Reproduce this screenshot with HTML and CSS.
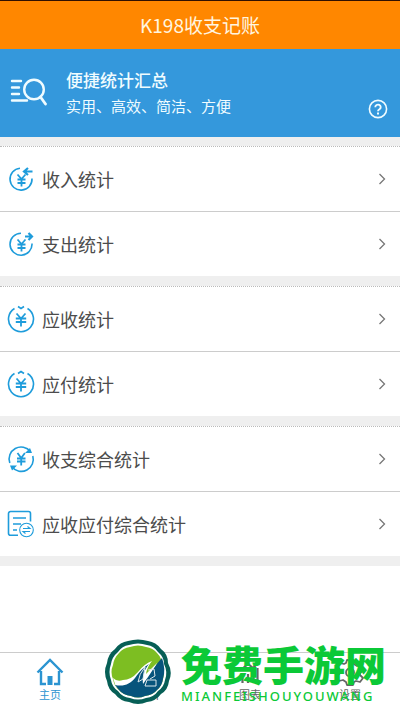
FILE: index.html
```html
<!DOCTYPE html>
<html lang="zh-CN">
<head>
<meta charset="utf-8">
<meta name="viewport" content="width=device-width, initial-scale=1">
<title>K198收支记账</title>
<link rel="stylesheet" href="styles.css">
</head>
<body>
<div class="app">
  <header class="header"><h1 class="title">K198收支记账</h1></header>
  <section class="banner">
    <svg class="banner-icon" viewBox="0 0 38 30" fill="none" stroke="currentColor" stroke-width="2.400" stroke-linecap="round">
      <path d="M2 3h9M2 9.500h7M2 16h7M2 22.500h15"/><circle cx="24" cy="11.500" r="9.800"/><path d="M30.500 19l5 7" stroke-width="2.800"/>
    </svg>
    <div class="banner-text">
      <h2 class="banner-title">便捷统计汇总</h2>
      <p class="banner-sub">实用、高效、简洁、方便</p>
    </div>
    <button class="help" aria-label="帮助">
      <svg viewBox="0 0 20 20" fill="none" stroke="currentColor" stroke-width="1.600"><circle cx="10" cy="10" r="8.600"/><path d="M7.300 8.200a2.700 2.500 0 1 1 4.200 2q-1.500.9-1.500 2" stroke-width="1.900"/><path d="M10 13.400v2" stroke-width="2"/></svg>
    </button>
  </section>
  <main class="groups">
    <nav class="group">
      <a class="row" href="#income">
        <svg class="row-icon" viewBox="0 0 28 28"><path d="M13 3.200A11 11 0 1 0 25 13.500"/><path class="yen" d="M10.500 9.500l4 4.500 4-4.500M10.500 14.500h8M10.500 18h8M14.500 14v7.500"/><path class="bold" d="M25.500 6.500h-8M21 3l-4 3.500 4 3.500"/></svg>
        <span class="label">收入统计</span><svg class="chevron" viewBox="0 0 8 12"><path d="M1.500 1l5 5-5 5"/></svg>
      </a>
      <a class="row" href="#expense">
        <svg class="row-icon" viewBox="0 0 28 28"><path d="M14 3.200A11 11 0 1 0 25 13.500"/><path class="yen" d="M10.500 9.500l4 4.500 4-4.500M10.500 14.500h8M10.500 18h8M14.500 14v7.500"/><path class="bold" d="M18 6.500h7M21.500 3l3.500 3.500-3.500 3.500"/></svg>
        <span class="label">支出统计</span><svg class="chevron" viewBox="0 0 8 12"><path d="M1.500 1l5 5-5 5"/></svg>
      </a>
    </nav>
    <nav class="group">
      <a class="row" href="#receivable">
        <svg class="row-icon" viewBox="0 0 28 28"><path d="M7.500 3.500a12.500 12.500 0 1 0 13 0M11 1.500l3 2 3-2"/><path class="yen" d="M9.500 8.500l4.500 5 4.500-5M8.800 13.500h10.400M8.800 17h10.400M14 13.500v8"/></svg>
        <span class="label">应收统计</span><svg class="chevron" viewBox="0 0 8 12"><path d="M1.500 1l5 5-5 5"/></svg>
      </a>
      <a class="row" href="#payable">
        <svg class="row-icon" viewBox="0 0 28 28"><path d="M7.500 3.500a12.500 12.500 0 1 0 13 0M11 3.500l3-2 3 2"/><path class="yen" d="M9.500 8.500l4.500 5 4.500-5M8.800 13.500h10.400M8.800 17h10.400M14 13.500v8"/></svg>
        <span class="label">应付统计</span><svg class="chevron" viewBox="0 0 8 12"><path d="M1.500 1l5 5-5 5"/></svg>
      </a>
    </nav>
    <nav class="group">
      <a class="row" href="#summary">
        <svg class="row-icon" viewBox="0 0 28 28"><path d="M2.800 18A12 12 0 0 1 23.500 6.500M25.800 11A12 12 0 0 1 5 22"/><path class="solid" d="M18 8h7l-2-5zM10 20.500H3l2 5z"/><path class="yen" d="M10.500 8l3.700 5 3.700-5M10 13.500h8.500M10 16.500h8.500M14.200 13v7.500"/></svg>
        <span class="label">收支综合统计</span><svg class="chevron" viewBox="0 0 8 12"><path d="M1.500 1l5 5-5 5"/></svg>
      </a>
      <a class="row" href="#balance">
        <svg class="row-icon" viewBox="0 0 28 28"><path d="M11 25.300H3.500a2 2 0 0 1-2-2V3.500a2 2 0 0 1 2-2h18a2 2 0 0 1 2 2v8M6 8h13M6 14h8M6 20h4"/><g class="thin"><circle cx="19.500" cy="20" r="6.800"/><path d="M16 18.500h7l-2.500-2M23 21.500h-7l2.500 2"/></g></svg>
        <span class="label">应收应付综合统计</span><svg class="chevron" viewBox="0 0 8 12"><path d="M1.500 1l5 5-5 5"/></svg>
      </a>
    </nav>
  </main>
  <footer class="footer">
    <nav class="tabs">
      <a class="tab active" href="#home"><svg viewBox="0 0 28 28" fill="none" stroke="currentColor" stroke-width="2.400"><path d="M1.500 14.500L14 2l12.500 12.500M5 13v13h5M23 13v13h-5"/><path d="M11.500 18h5v9h-5z" fill="currentColor" stroke="none"/></svg><span>主页</span></a>
      <a class="tab" href="#stats"><svg viewBox="0 0 28 28" fill="none" stroke="currentColor" stroke-width="1.600"><path d="M5 3h18v22H5zM10 9h8M10 15h8"/></svg><span>统计</span></a>
      <a class="tab" href="#charts"><svg viewBox="0 0 28 28" fill="none" stroke="currentColor" stroke-width="2.200"><path d="M6.500 20v5M12 16v9M17.500 18v7M21.500 10v15M5 12l7-6 5 4 6-6"/></svg><span>图表</span></a>
      <a class="tab" href="#settings"><svg viewBox="0 0 28 28" fill="none" stroke="currentColor" stroke-width="1.800" stroke-linejoin="round"><path d="M11 2h6l1 4 3 2 4-1 2 5-3 3v2l3 3-3 4-4-1-2 1-1 3h-6l-1-3-3-2-4 1-2-5 3-3v-3l-3-3 3-4 4 1 2-1z"/><circle cx="14" cy="14.500" r="4"/></svg><span>设置</span></a>
    </nav>
    <div class="watermark">
      <svg class="mark" viewBox="0 0 68 66">
        <path d="M24 2Q34-1 44 2Q52 3 57 10Q64 15 64 24Q69 33 65 42Q64 51 57 55Q52 62 43 63Q34 67 25 63Q16 62 11 55Q4 51 3 42Q-1 33 3 24Q4 15 11 10Q16 3 24 2Z" fill="#075f56"/>
        <path d="M25 6Q34 3 43 6Q50 7 54 13Q60 18 60 25Q64 33 61 41Q60 48 54 52Q50 58 42 59Q34 62 26 59Q18 58 14 52Q8 48 7 41Q4 33 7 25Q8 18 14 13Q18 7 25 6Z" fill="#fff"/>
        <path d="M26 8Q34 5 42 8Q49 9 53 14Q58 19 58 26Q61 33 59 40Q58 47 53 51Q49 56 41 57Q34 60 27 57Q19 56 15 51Q10 47 9 40Q6 33 9 26Q10 19 15 14Q19 9 26 8Z" fill="#7dbe22"/>
        <path d="M9 39q4 4 10 2 8 0 15-8 6-8 14-11-5 6-6 13 5-5 11-11-3 6-3 12l-10 12-18 4-10-4z" fill="#fff"/>
        <path d="M11 46c9 2 15-1 20-7 5-7 9-11 14-14-5 6-7 13-6 20 7-9 12-19 19-26q4 11 1 21-1 7-6 11-4 5-12 6-7 3-14 0-8-1-12-6z" fill="#07547c"/>
        <path d="M34 43q1-8 7-15l-2 12zM44 31l6-1 1 7-5 3M43 41h9v6H41z" fill="none" stroke="#dce7eb"/>
      </svg>
      <div class="watermark-text"><strong class="brand">免费手游网</strong><span class="domain">MIANFEISHOUYOUWANG</span></div>
    </div>
  </footer>
</div>
</body>
</html>
```
FILE: styles.css
```css
* { box-sizing: border-box; }
body {
  margin: 0;
  background: #fff;
  color: #4c4c4c;
  font-family: "Noto Sans CJK SC", sans-serif;
}
h1, h2, p { margin: 0; font-weight: 400; }
a { color: inherit; text-decoration: none; }
svg { display: block; flex: none; }
.app { min-height: 100vh; display: flex; flex-direction: column; }
.header {
  border-top: 1px solid #301000;
  background: #ff8700;
  color: #fff6e0;
  padding: 12px 16px;
  text-align: center;
}
.title { font-size: 19px; line-height: 24px; }
.banner {
  display: flex;
  align-items: center;
  background: #3498dc;
  color: #f0fcff;
  padding: 18px 12px 18px 10px;
}
.banner-icon { width: 38px; height: 30px; margin-right: 18px; }
.banner-text { flex: 1; }
.banner-title { font-size: 17px; line-height: 26px; font-weight: 500; }
.banner-sub { font-size: 15px; line-height: 26px; }
.help {
  align-self: flex-end;
  width: 20px;
  height: 20px;
  padding: 0;
  border: 0;
  background: none;
  color: inherit;
}
.groups { flex: 1; }
.group { border-bottom: 10px solid #efefef; }
.group:first-child { border-top: 9px solid #efefef; }
.row {
  display: flex;
  align-items: center;
  height: 65px;
  padding: 0 14px 0 7px;
  border-top: 1px solid #ccc;
}
.row:first-child { border-top: 1px dotted #bbb; }
.row-icon {
  width: 28px;
  height: 28px;
  margin-right: 7px;
  fill: none;
  stroke: #1e9cdb;
  stroke-width: 1.6;
}
.yen { stroke-width: 1.8; }
.bold { stroke-width: 2.2; }
.thin { stroke-width: 1.1; }
.solid { fill: #1e9cdb; stroke: none; }
.label { flex: 1; font-size: 18px; line-height: 26px; }
.chevron { width: 8px; height: 12px; fill: none; stroke: #777; stroke-width: 1.3; }
.footer { position: relative; border-top: 1px solid #ccc; }
.tabs { display: flex; }
.tab {
  flex: 1;
  display: flex;
  flex-direction: column;
  align-items: center;
  padding: 5px 0 9px;
  color: #666;
  font-size: 11px;
  line-height: 16px;
}
.tab svg { width: 28px; height: 28px; }
.tab.active { color: #2b94d1; }
.watermark {
  position: absolute;
  left: 26%;
  bottom: 6px;
  display: flex;
  align-items: center;
  gap: 9px;
  pointer-events: none;
}
.mark { width: 68px; height: 66px; }
.watermark-text { display: flex; flex-direction: column; gap: 2px; color: #0bc937; }
.brand { font-size: 41px; line-height: 46px; font-weight: 900; }
.domain {
  font-family: "Noto Sans", sans-serif;
  font-size: 13px;
  line-height: 16px;
  font-weight: 500;
  letter-spacing: 2px;
}
```
